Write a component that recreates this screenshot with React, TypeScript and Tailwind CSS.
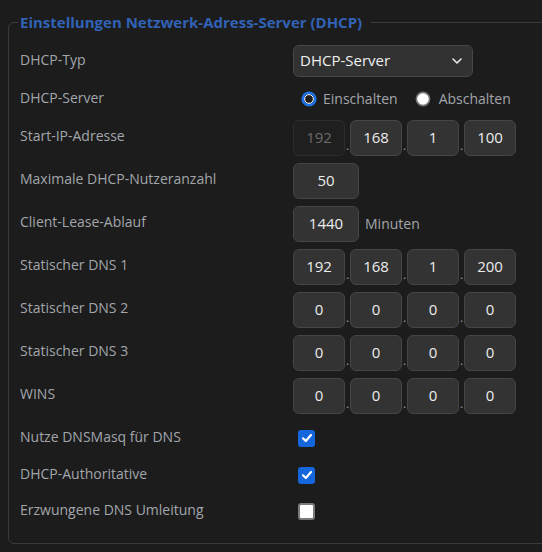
import React from "react";

const font = { fontFamily: '"Open Sans", "Noto Sans", sans-serif' };

function Label({ children }: { children: React.ReactNode }) {
    return <div className="w-[273px] shrink-0 pb-1 text-[14px] text-[#a2a6ab]">{children}</div>;
}

function Box({ value, wide, disabled }: { value: string; wide?: boolean; disabled?: boolean }) {
    return (
        <div
            className={
                (wide ? "w-[66px] " : "w-[52px] ") +
                (disabled
                    ? "border-[#2c2c2c] bg-[#1f1f1f] text-[#6b6b6b] "
                    : "border-[#454545] bg-[#333333] text-[#ececec] ") +
                "flex h-[36px] items-center justify-center rounded-md border text-[15px]"
            }
        >
            {value}
        </div>
    );
}

function Ip({ parts, firstDisabled }: { parts: string[]; firstDisabled?: boolean }) {
    return (
        <div className="flex items-end">
            {parts.map((p, i) => (
                <React.Fragment key={i}>
                    {i > 0 && <span className="w-[5px] pb-1 text-center text-[12px] leading-none text-[#9a9a9a]">.</span>}
                    <Box value={p} disabled={firstDisabled && i === 0} />
                </React.Fragment>
            ))}
        </div>
    );
}

function Check({ on }: { on: boolean }) {
    return on ? (
        <div className="ml-[5px] flex h-[17px] w-[17px] items-center justify-center rounded-[3px] bg-[#1466dc]">
            <svg width="12" height="12" viewBox="0 0 12 12">
                <path d="M2 6.3 L4.8 9 L10 3" fill="none" stroke="white" strokeWidth="2.2" strokeLinecap="round" strokeLinejoin="round" />
            </svg>
        </div>
    ) : (
        <div className="ml-[5px] h-[17px] w-[17px] rounded-[3px] border-2 border-[#7a7a7a] bg-white" />
    );
}

function Row({ label, h, children }: { label: string; h: string; children?: React.ReactNode }) {
    return (
        <div className={"flex items-center " + h}>
            <Label>{label}</Label>
            {children}
        </div>
    );
}

export default function App() {
    return (
        <div className="h-[552px] w-[542px] overflow-hidden bg-[#1c1c1c]" style={font}>
            <fieldset className="ml-2 mt-[13px] h-[531px] w-[560px] rounded-md border border-[#3a3a3a] pl-[11px] pr-0">
                <legend className="-ml-[2px] pl-[2px] pr-[9px] text-[15px] font-bold leading-[18px] text-[#3162b6]">
                    Einstellungen Netzwerk-Adress-Server (DHCP)
                </legend>
                <div className="pt-[14px]">
                    <Row label="DHCP-Typ" h="h-[32px]">
                        <div className="flex h-[32px] w-[180px] items-center justify-between rounded-md border border-[#474747] bg-[#323232] pl-[6px] pr-[9px] text-[15px] text-[#f0f0f0]">
                            <span className="pb-[1px]">DHCP-Server</span>
                            <svg width="12" height="12" viewBox="0 0 12 12">
                                <path d="M2 4 L6 8 L10 4" fill="none" stroke="#e8e8e8" strokeWidth="1.6" strokeLinecap="round" strokeLinejoin="round" />
                            </svg>
                        </div>
                    </Row>
                    <Row label="DHCP-Server" h="h-[32px] mt-[6px]">
                        <div className="flex items-center text-[14px] text-[#a2a6ab]">
                            <svg width="16" height="16" viewBox="0 0 16 16" className="ml-[8px]">
                                <circle cx="8" cy="8" r="6.3" fill="#1c1c1c" stroke="#1a73e8" strokeWidth="2.6" />
                                <circle cx="8" cy="8" r="4.4" fill="none" stroke="#ffffff" strokeWidth="1" />
                            </svg>
                            <span className="ml-[6px] pb-[1px]">Einschalten</span>
                            <svg width="16" height="16" viewBox="0 0 16 16" className="ml-[17px]">
                                <circle cx="8" cy="8" r="6.6" fill="#ffffff" stroke="#767676" strokeWidth="1.6" />
                            </svg>
                            <span className="ml-[8px] pb-[1px]">Abschalten</span>
                        </div>
                    </Row>
                    <Row label="Start-IP-Adresse" h="h-[43px] mt-[1px]">
                        <Ip parts={["192", "168", "1", "100"]} firstDisabled />
                    </Row>
                    <Row label="Maximale DHCP-Nutzeranzahl" h="h-[43px]">
                        <Box value="50" wide />
                    </Row>
                    <Row label="Client-Lease-Ablauf" h="h-[43px]">
                        <Box value="1440" wide />
                        <span className="ml-[6px] text-[14px] text-[#a2a6ab]">Minuten</span>
                    </Row>
                    <Row label="Statischer DNS 1" h="h-[43px]">
                        <Ip parts={["192", "168", "1", "200"]} />
                    </Row>
                    <Row label="Statischer DNS 2" h="h-[43px]">
                        <Ip parts={["0", "0", "0", "0"]} />
                    </Row>
                    <Row label="Statischer DNS 3" h="h-[43px]">
                        <Ip parts={["0", "0", "0", "0"]} />
                    </Row>
                    <Row label="WINS" h="h-[43px]">
                        <Ip parts={["0", "0", "0", "0"]} />
                    </Row>
                    <Row label="Nutze DNSMasq für DNS" h="h-[36px] mt-[3px]">
                        <Check on />
                    </Row>
                    <Row label="DHCP-Authoritative" h="h-[36px] mt-[1px]">
                        <Check on />
                    </Row>
                    <Row label="Erzwungene DNS Umleitung" h="h-[36px]">
                        <Check on={false} />
                    </Row>
                </div>
            </fieldset>
        </div>
    );
}
